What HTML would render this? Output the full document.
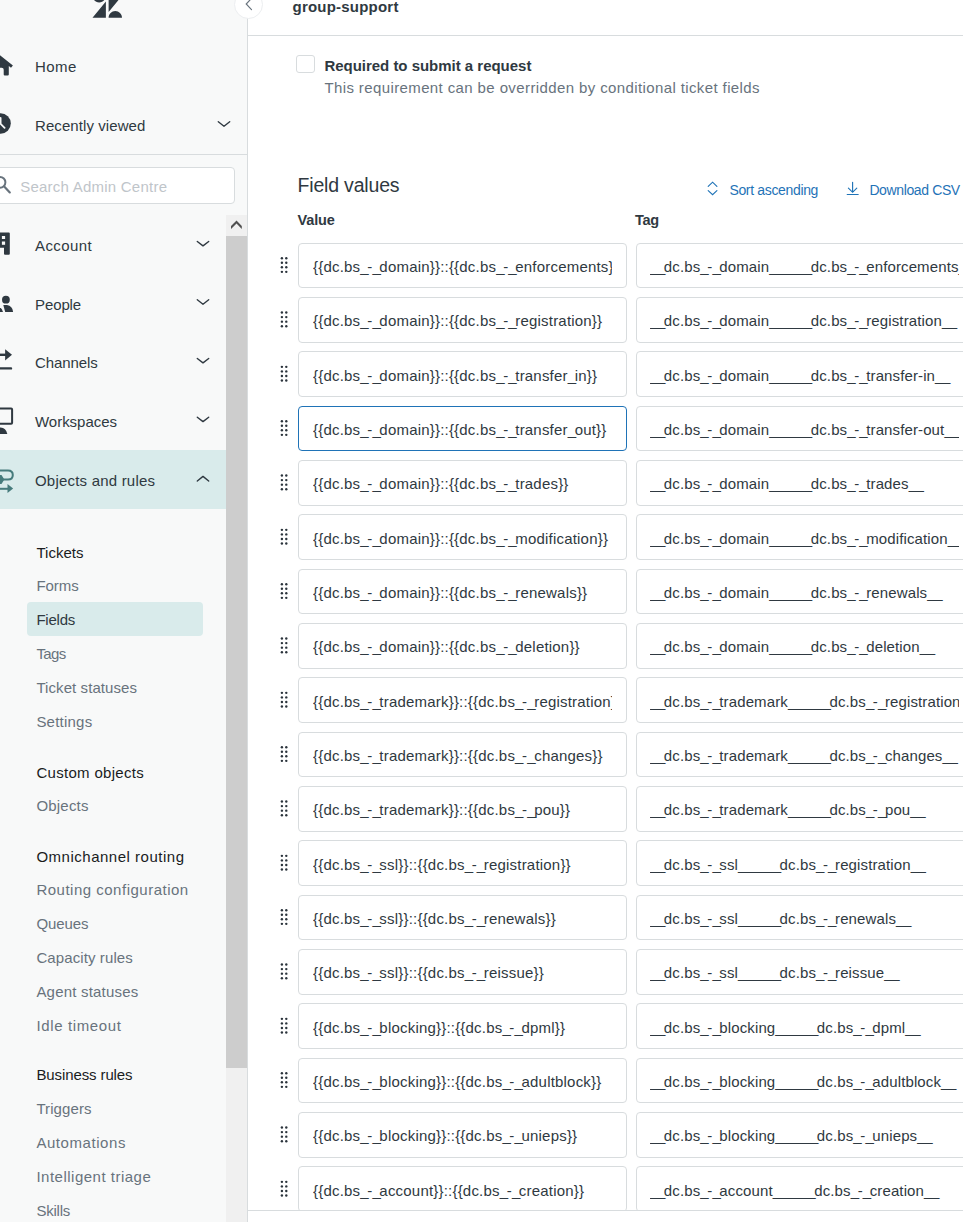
<!DOCTYPE html>
<html><head><meta charset="utf-8"><style>
*{margin:0;padding:0;box-sizing:border-box}
html,body{width:963px;height:1222px;overflow:hidden;background:#fff;font-family:"Liberation Sans",sans-serif}
.t{position:absolute;white-space:nowrap;line-height:1}
#side{position:absolute;left:0;top:0;width:247px;height:1222px;background:#f8f9f9}
#vline{position:absolute;left:247px;top:0;width:1px;height:1222px;background:#d8dcde}
#hline{position:absolute;left:248px;top:35px;width:715px;height:1px;background:#d8dcde}
#bline{position:absolute;left:248px;top:1210px;width:715px;height:1px;background:#d8dcde}
#sep{position:absolute;left:0;top:154px;width:247px;height:1px;background:#d8dcde}
#search{position:absolute;left:-10px;top:167px;width:245px;height:37px;background:#fff;border:1px solid #d8dcde;border-radius:4px}
#sb{position:absolute;left:226px;top:215px;width:21px;height:1007px;background:#f0f0f0}
#thumb{position:absolute;left:226px;top:236px;width:21px;height:832px;background:#cdcdcd}
#band{position:absolute;left:0;top:450px;width:226px;height:59px;background:#d9ebeb}
#fsel{position:absolute;left:27px;top:602px;width:176px;height:34px;background:#d9ebeb;border-radius:4px}
#main{position:absolute;left:248px;top:36px;width:715px;height:1174px;overflow:hidden}
.in{position:absolute;left:50px;width:329px;height:45.67px;border:1px solid #d8dcde;border-radius:4px;background:#fff;overflow:hidden}
.in.f{border-color:#1f73b7}
.in.tg{left:388px;width:400px}
.in span{position:absolute;left:14px;right:14px;overflow:hidden;white-space:nowrap;font-size:15px;line-height:1.4;letter-spacing:0.2px;color:#2f3941}
.in.tg span{left:13px;right:auto;width:309px;letter-spacing:0.12px}
.in i{font-style:normal;letter-spacing:-1.42px}
.h{position:absolute;left:32.8px;width:8px;height:16px}
.h b{position:absolute;width:2.3px;height:2.3px;background:#17202a;border-radius:0.5px}
#cb{position:absolute;left:296px;top:55px;width:19px;height:18px;border:1px solid #d8dcde;border-radius:3px;background:#fff}
#coll{position:absolute;left:234px;top:-10px;width:29px;height:29px;border-radius:50%;background:#fff;border:1px solid #eceef0}
</style></head><body>
<div id="side"></div>
<div id="sep"></div>
<div id="search"></div>
<div id="sb"></div><div id="thumb"></div>
<div id="band"></div>
<div id="fsel"></div>
<div id="vline"></div>
<div id="hline"></div>
<div id="main">
<div class="in" style="top:206.60px"><span style="top:12.40px">{{dc.bs<i>_</i>-<i>_</i>domain}}::{{dc.bs<i>_</i>-<i>_</i>enforcements}}</span></div>
<div class="in tg" style="top:206.60px"><span style="top:12.40px"><i>__</i>dc.bs<i>_</i>-<i>_</i>domain<i>______</i>dc.bs<i>_</i>-<i>_</i>enforcements<i>__</i></span></div>
<div class="in" style="top:260.93px"><span style="top:12.40px">{{dc.bs<i>_</i>-<i>_</i>domain}}::{{dc.bs<i>_</i>-<i>_</i>registration}}</span></div>
<div class="in tg" style="top:260.93px"><span style="top:12.40px"><i>__</i>dc.bs<i>_</i>-<i>_</i>domain<i>______</i>dc.bs<i>_</i>-<i>_</i>registration<i>__</i></span></div>
<div class="in" style="top:315.27px"><span style="top:12.40px">{{dc.bs<i>_</i>-<i>_</i>domain}}::{{dc.bs<i>_</i>-<i>_</i>transfer<i>_</i>in}}</span></div>
<div class="in tg" style="top:315.27px"><span style="top:12.40px"><i>__</i>dc.bs<i>_</i>-<i>_</i>domain<i>______</i>dc.bs<i>_</i>-<i>_</i>transfer-in<i>__</i></span></div>
<div class="in f" style="top:369.60px"><span style="top:12.40px">{{dc.bs<i>_</i>-<i>_</i>domain}}::{{dc.bs<i>_</i>-<i>_</i>transfer<i>_</i>out}}</span></div>
<div class="in tg" style="top:369.60px"><span style="top:12.40px"><i>__</i>dc.bs<i>_</i>-<i>_</i>domain<i>______</i>dc.bs<i>_</i>-<i>_</i>transfer-out<i>__</i></span></div>
<div class="in" style="top:423.93px"><span style="top:12.40px">{{dc.bs<i>_</i>-<i>_</i>domain}}::{{dc.bs<i>_</i>-<i>_</i>trades}}</span></div>
<div class="in tg" style="top:423.93px"><span style="top:12.40px"><i>__</i>dc.bs<i>_</i>-<i>_</i>domain<i>______</i>dc.bs<i>_</i>-<i>_</i>trades<i>__</i></span></div>
<div class="in" style="top:478.26px"><span style="top:12.40px">{{dc.bs<i>_</i>-<i>_</i>domain}}::{{dc.bs<i>_</i>-<i>_</i>modification}}</span></div>
<div class="in tg" style="top:478.26px"><span style="top:12.40px"><i>__</i>dc.bs<i>_</i>-<i>_</i>domain<i>______</i>dc.bs<i>_</i>-<i>_</i>modification<i>__</i></span></div>
<div class="in" style="top:532.60px"><span style="top:12.40px">{{dc.bs<i>_</i>-<i>_</i>domain}}::{{dc.bs<i>_</i>-<i>_</i>renewals}}</span></div>
<div class="in tg" style="top:532.60px"><span style="top:12.40px"><i>__</i>dc.bs<i>_</i>-<i>_</i>domain<i>______</i>dc.bs<i>_</i>-<i>_</i>renewals<i>__</i></span></div>
<div class="in" style="top:586.93px"><span style="top:12.40px">{{dc.bs<i>_</i>-<i>_</i>domain}}::{{dc.bs<i>_</i>-<i>_</i>deletion}}</span></div>
<div class="in tg" style="top:586.93px"><span style="top:12.40px"><i>__</i>dc.bs<i>_</i>-<i>_</i>domain<i>______</i>dc.bs<i>_</i>-<i>_</i>deletion<i>__</i></span></div>
<div class="in" style="top:641.26px"><span style="top:12.40px">{{dc.bs<i>_</i>-<i>_</i>trademark}}::{{dc.bs<i>_</i>-<i>_</i>registration}}</span></div>
<div class="in tg" style="top:641.26px"><span style="top:12.40px"><i>__</i>dc.bs<i>_</i>-<i>_</i>trademark<i>______</i>dc.bs<i>_</i>-<i>_</i>registration<i>__</i></span></div>
<div class="in" style="top:695.60px"><span style="top:12.40px">{{dc.bs<i>_</i>-<i>_</i>trademark}}::{{dc.bs<i>_</i>-<i>_</i>changes}}</span></div>
<div class="in tg" style="top:695.60px"><span style="top:12.40px"><i>__</i>dc.bs<i>_</i>-<i>_</i>trademark<i>______</i>dc.bs<i>_</i>-<i>_</i>changes<i>__</i></span></div>
<div class="in" style="top:749.93px"><span style="top:12.40px">{{dc.bs<i>_</i>-<i>_</i>trademark}}::{{dc.bs<i>_</i>-<i>_</i>pou}}</span></div>
<div class="in tg" style="top:749.93px"><span style="top:12.40px"><i>__</i>dc.bs<i>_</i>-<i>_</i>trademark<i>______</i>dc.bs<i>_</i>-<i>_</i>pou<i>__</i></span></div>
<div class="in" style="top:804.26px"><span style="top:12.40px">{{dc.bs<i>_</i>-<i>_</i>ssl}}::{{dc.bs<i>_</i>-<i>_</i>registration}}</span></div>
<div class="in tg" style="top:804.26px"><span style="top:12.40px"><i>__</i>dc.bs<i>_</i>-<i>_</i>ssl<i>______</i>dc.bs<i>_</i>-<i>_</i>registration<i>__</i></span></div>
<div class="in" style="top:858.60px"><span style="top:12.40px">{{dc.bs<i>_</i>-<i>_</i>ssl}}::{{dc.bs<i>_</i>-<i>_</i>renewals}}</span></div>
<div class="in tg" style="top:858.60px"><span style="top:12.40px"><i>__</i>dc.bs<i>_</i>-<i>_</i>ssl<i>______</i>dc.bs<i>_</i>-<i>_</i>renewals<i>__</i></span></div>
<div class="in" style="top:912.93px"><span style="top:12.40px">{{dc.bs<i>_</i>-<i>_</i>ssl}}::{{dc.bs<i>_</i>-<i>_</i>reissue}}</span></div>
<div class="in tg" style="top:912.93px"><span style="top:12.40px"><i>__</i>dc.bs<i>_</i>-<i>_</i>ssl<i>______</i>dc.bs<i>_</i>-<i>_</i>reissue<i>__</i></span></div>
<div class="in" style="top:967.26px"><span style="top:12.40px">{{dc.bs<i>_</i>-<i>_</i>blocking}}::{{dc.bs<i>_</i>-<i>_</i>dpml}}</span></div>
<div class="in tg" style="top:967.26px"><span style="top:12.40px"><i>__</i>dc.bs<i>_</i>-<i>_</i>blocking<i>______</i>dc.bs<i>_</i>-<i>_</i>dpml<i>__</i></span></div>
<div class="in" style="top:1021.60px"><span style="top:12.40px">{{dc.bs<i>_</i>-<i>_</i>blocking}}::{{dc.bs<i>_</i>-<i>_</i>adultblock}}</span></div>
<div class="in tg" style="top:1021.60px"><span style="top:12.40px"><i>__</i>dc.bs<i>_</i>-<i>_</i>blocking<i>______</i>dc.bs<i>_</i>-<i>_</i>adultblock<i>__</i></span></div>
<div class="in" style="top:1075.93px"><span style="top:12.40px">{{dc.bs<i>_</i>-<i>_</i>blocking}}::{{dc.bs<i>_</i>-<i>_</i>unieps}}</span></div>
<div class="in tg" style="top:1075.93px"><span style="top:12.40px"><i>__</i>dc.bs<i>_</i>-<i>_</i>blocking<i>______</i>dc.bs<i>_</i>-<i>_</i>unieps<i>__</i></span></div>
<div class="in" style="top:1130.26px"><span style="top:12.40px">{{dc.bs<i>_</i>-<i>_</i>account}}::{{dc.bs<i>_</i>-<i>_</i>creation}}</span></div>
<div class="in tg" style="top:1130.26px"><span style="top:12.40px"><i>__</i>dc.bs<i>_</i>-<i>_</i>account<i>______</i>dc.bs<i>_</i>-<i>_</i>creation<i>__</i></span></div>
</div>
<div id="bline"></div>
<div id="cb"></div>
<div id="coll"></div>
<svg width="36.5" height="36.5" viewBox="0 0 24 24" style="position:absolute;left:88.8px;top:-9.8px"><path fill="#2f3941" d="M11.1 7.6v10.6H2.3zm0-3.8C11.1 6.2 9.1 8.2 6.7 8.2S2.3 6.2 2.3 3.8zm1.8 14.4c0-2.4 2-4.4 4.4-4.4s4.4 2 4.4 4.4zm0-3.8V3.8h8.8z"/></svg>
<svg id="sideicons" width="40" height="500" viewBox="0 0 40 500" style="position:absolute;left:0;top:0">
<path fill="#2f3941" d="M-3,52.8 L12.9,65.6 L11,67.7 L8.8,66 L8.8,74.5 Q8.8,75.6 7.7,75.6 L4.8,75.6 Q3.7,75.6 3.7,74.5 L3.7,69.8 Q3.7,67.8 1.7,67.8 L-5,67.8 Z"/>
<circle cx="0.55" cy="123.5" r="10.25" fill="#2f3941"/>
<path d="M0.6,118 V123.8 L4.6,127.8" stroke="#f8f9f9" stroke-width="1.8" fill="none" stroke-linecap="round"/>
<circle cx="0" cy="182.3" r="5.4" stroke="#68737d" stroke-width="2" fill="none"/>
<path d="M4.2,186.6 L9.8,192.4" stroke="#68737d" stroke-width="2.2" stroke-linecap="round"/>
<path fill="#2f3941" d="M-6,233.6 Q-6,232.6 -5,232.6 L8.8,232.6 Q9.8,232.6 9.8,233.6 L9.8,253.8 Q9.8,254.8 8.8,254.8 L5,254.8 Q4,254.8 4,253.8 L4,247.8 L-6,247.8 Z"/>
<rect x="1.9" y="236" width="3.2" height="3" fill="#f8f9f9"/>
<rect x="1.9" y="241.5" width="3.2" height="3.3" fill="#f8f9f9"/>
<circle cx="5.9" cy="299.7" r="3.9" fill="#2f3941"/>
<path fill="#2f3941" d="M3.3,305.1 L7,305.1 Q12.5,306 13.1,312 L5.2,312 Z"/>
<path fill="#2f3941" d="M-4,306 Q1.8,306.5 3,312 L-4,312 Z"/>
<path d="M-2,354.8 H6" stroke="#2f3941" stroke-width="2.4"/>
<path fill="#2f3941" d="M5.1,349.2 L12,354.8 L5.1,360.6 Z"/>
<path d="M-2,368.4 H11" stroke="#2f3941" stroke-width="2.4" stroke-linecap="round"/>
<path d="M-4,408.4 H11.1 Q12.1,408.4 12.1,409.4 L12.1,422.8 Q12.1,423.8 11.1,423.8 H-4" stroke="#2f3941" stroke-width="2" fill="none"/>
<path fill="#2f3941" d="M-6,434 L-6,431 Q-4,427.5 0.5,427.5 Q6,427.5 7.3,434 Z"/>
<path d="M-3,470.5 H8 Q12.8,470.5 12.8,475 Q12.8,479.6 8,479.6 H3" stroke="#467b7c" stroke-width="2" fill="none"/>
<path fill="#467b7c" d="M-3,475 L1.5,475 L4.3,479.6 L1.5,484 L-3,484 Z"/>
<path d="M-3,488.8 H8" stroke="#467b7c" stroke-width="2"/>
<path fill="#467b7c" d="M7.5,484 L13.1,488.6 L7.5,493 Z"/>
</svg>
<svg width="247" height="500" style="position:absolute;left:0;top:0"><path d="M218.3,121.8 L224,126.2 L229.7,121.8" stroke="#2f3941" stroke-width="1.4" fill="none" stroke-linecap="round" stroke-linejoin="round"/><path d="M197.3,241.5 L203,245.89999999999998 L208.7,241.5" stroke="#2f3941" stroke-width="1.4" fill="none" stroke-linecap="round" stroke-linejoin="round"/><path d="M197.3,299.8 L203,304.2 L208.7,299.8" stroke="#2f3941" stroke-width="1.4" fill="none" stroke-linecap="round" stroke-linejoin="round"/><path d="M197.3,358.5 L203,362.9 L208.7,358.5" stroke="#2f3941" stroke-width="1.4" fill="none" stroke-linecap="round" stroke-linejoin="round"/><path d="M197.3,417.2 L203,421.59999999999997 L208.7,417.2" stroke="#2f3941" stroke-width="1.4" fill="none" stroke-linecap="round" stroke-linejoin="round"/><path d="M197.3,481.0 L203,476.4 L208.7,481.0" stroke="#2f3941" stroke-width="1.4" fill="none" stroke-linecap="round" stroke-linejoin="round"/>
<path d="M231,226 L236.5,220.6 L241.8,226 L241.8,228.9 L236.5,223.6 L231,228.9 Z" fill="#505050"/>
</svg>
<svg width="963" height="220" style="position:absolute;left:0;top:0">
<path d="M251.5,-1.6 L246.2,4 L251.5,9.6" stroke="#68737d" stroke-width="1.15" fill="none" stroke-linecap="round"/>
<path d="M708.2,186.4 L712.6,182.2 L716.9,186.4 M708.2,190.6 L712.6,194.6 L716.9,190.6" stroke="#1f73b7" stroke-width="1.15" fill="none" stroke-linecap="round"/>
<path d="M852.6,182.3 V192 M848.4,188.2 L852.6,192.3 L856.8,188.2 M847.2,194.5 H858.2" stroke="#1f73b7" stroke-width="1.15" fill="none" stroke-linecap="round"/>
</svg>
<svg width="963" height="1222" style="position:absolute;left:0;top:0" fill="#2a333b"><circle cx="281.9" cy="258.20" r="1.2"/><circle cx="286.3" cy="258.20" r="1.2"/><circle cx="281.9" cy="262.75" r="1.2"/><circle cx="286.3" cy="262.75" r="1.2"/><circle cx="281.9" cy="267.30" r="1.2"/><circle cx="286.3" cy="267.30" r="1.2"/><circle cx="281.9" cy="271.85" r="1.2"/><circle cx="286.3" cy="271.85" r="1.2"/><circle cx="281.9" cy="312.53" r="1.2"/><circle cx="286.3" cy="312.53" r="1.2"/><circle cx="281.9" cy="317.08" r="1.2"/><circle cx="286.3" cy="317.08" r="1.2"/><circle cx="281.9" cy="321.63" r="1.2"/><circle cx="286.3" cy="321.63" r="1.2"/><circle cx="281.9" cy="326.18" r="1.2"/><circle cx="286.3" cy="326.18" r="1.2"/><circle cx="281.9" cy="366.87" r="1.2"/><circle cx="286.3" cy="366.87" r="1.2"/><circle cx="281.9" cy="371.42" r="1.2"/><circle cx="286.3" cy="371.42" r="1.2"/><circle cx="281.9" cy="375.97" r="1.2"/><circle cx="286.3" cy="375.97" r="1.2"/><circle cx="281.9" cy="380.52" r="1.2"/><circle cx="286.3" cy="380.52" r="1.2"/><circle cx="281.9" cy="421.20" r="1.2"/><circle cx="286.3" cy="421.20" r="1.2"/><circle cx="281.9" cy="425.75" r="1.2"/><circle cx="286.3" cy="425.75" r="1.2"/><circle cx="281.9" cy="430.30" r="1.2"/><circle cx="286.3" cy="430.30" r="1.2"/><circle cx="281.9" cy="434.85" r="1.2"/><circle cx="286.3" cy="434.85" r="1.2"/><circle cx="281.9" cy="475.53" r="1.2"/><circle cx="286.3" cy="475.53" r="1.2"/><circle cx="281.9" cy="480.08" r="1.2"/><circle cx="286.3" cy="480.08" r="1.2"/><circle cx="281.9" cy="484.63" r="1.2"/><circle cx="286.3" cy="484.63" r="1.2"/><circle cx="281.9" cy="489.18" r="1.2"/><circle cx="286.3" cy="489.18" r="1.2"/><circle cx="281.9" cy="529.87" r="1.2"/><circle cx="286.3" cy="529.87" r="1.2"/><circle cx="281.9" cy="534.41" r="1.2"/><circle cx="286.3" cy="534.41" r="1.2"/><circle cx="281.9" cy="538.97" r="1.2"/><circle cx="286.3" cy="538.97" r="1.2"/><circle cx="281.9" cy="543.51" r="1.2"/><circle cx="286.3" cy="543.51" r="1.2"/><circle cx="281.9" cy="584.20" r="1.2"/><circle cx="286.3" cy="584.20" r="1.2"/><circle cx="281.9" cy="588.75" r="1.2"/><circle cx="286.3" cy="588.75" r="1.2"/><circle cx="281.9" cy="593.30" r="1.2"/><circle cx="286.3" cy="593.30" r="1.2"/><circle cx="281.9" cy="597.85" r="1.2"/><circle cx="286.3" cy="597.85" r="1.2"/><circle cx="281.9" cy="638.53" r="1.2"/><circle cx="286.3" cy="638.53" r="1.2"/><circle cx="281.9" cy="643.08" r="1.2"/><circle cx="286.3" cy="643.08" r="1.2"/><circle cx="281.9" cy="647.63" r="1.2"/><circle cx="286.3" cy="647.63" r="1.2"/><circle cx="281.9" cy="652.18" r="1.2"/><circle cx="286.3" cy="652.18" r="1.2"/><circle cx="281.9" cy="692.86" r="1.2"/><circle cx="286.3" cy="692.86" r="1.2"/><circle cx="281.9" cy="697.41" r="1.2"/><circle cx="286.3" cy="697.41" r="1.2"/><circle cx="281.9" cy="701.96" r="1.2"/><circle cx="286.3" cy="701.96" r="1.2"/><circle cx="281.9" cy="706.51" r="1.2"/><circle cx="286.3" cy="706.51" r="1.2"/><circle cx="281.9" cy="747.20" r="1.2"/><circle cx="286.3" cy="747.20" r="1.2"/><circle cx="281.9" cy="751.75" r="1.2"/><circle cx="286.3" cy="751.75" r="1.2"/><circle cx="281.9" cy="756.30" r="1.2"/><circle cx="286.3" cy="756.30" r="1.2"/><circle cx="281.9" cy="760.85" r="1.2"/><circle cx="286.3" cy="760.85" r="1.2"/><circle cx="281.9" cy="801.53" r="1.2"/><circle cx="286.3" cy="801.53" r="1.2"/><circle cx="281.9" cy="806.08" r="1.2"/><circle cx="286.3" cy="806.08" r="1.2"/><circle cx="281.9" cy="810.63" r="1.2"/><circle cx="286.3" cy="810.63" r="1.2"/><circle cx="281.9" cy="815.18" r="1.2"/><circle cx="286.3" cy="815.18" r="1.2"/><circle cx="281.9" cy="855.86" r="1.2"/><circle cx="286.3" cy="855.86" r="1.2"/><circle cx="281.9" cy="860.41" r="1.2"/><circle cx="286.3" cy="860.41" r="1.2"/><circle cx="281.9" cy="864.96" r="1.2"/><circle cx="286.3" cy="864.96" r="1.2"/><circle cx="281.9" cy="869.51" r="1.2"/><circle cx="286.3" cy="869.51" r="1.2"/><circle cx="281.9" cy="910.20" r="1.2"/><circle cx="286.3" cy="910.20" r="1.2"/><circle cx="281.9" cy="914.75" r="1.2"/><circle cx="286.3" cy="914.75" r="1.2"/><circle cx="281.9" cy="919.30" r="1.2"/><circle cx="286.3" cy="919.30" r="1.2"/><circle cx="281.9" cy="923.85" r="1.2"/><circle cx="286.3" cy="923.85" r="1.2"/><circle cx="281.9" cy="964.53" r="1.2"/><circle cx="286.3" cy="964.53" r="1.2"/><circle cx="281.9" cy="969.08" r="1.2"/><circle cx="286.3" cy="969.08" r="1.2"/><circle cx="281.9" cy="973.63" r="1.2"/><circle cx="286.3" cy="973.63" r="1.2"/><circle cx="281.9" cy="978.18" r="1.2"/><circle cx="286.3" cy="978.18" r="1.2"/><circle cx="281.9" cy="1018.86" r="1.2"/><circle cx="286.3" cy="1018.86" r="1.2"/><circle cx="281.9" cy="1023.41" r="1.2"/><circle cx="286.3" cy="1023.41" r="1.2"/><circle cx="281.9" cy="1027.96" r="1.2"/><circle cx="286.3" cy="1027.96" r="1.2"/><circle cx="281.9" cy="1032.51" r="1.2"/><circle cx="286.3" cy="1032.51" r="1.2"/><circle cx="281.9" cy="1073.19" r="1.2"/><circle cx="286.3" cy="1073.19" r="1.2"/><circle cx="281.9" cy="1077.74" r="1.2"/><circle cx="286.3" cy="1077.74" r="1.2"/><circle cx="281.9" cy="1082.29" r="1.2"/><circle cx="286.3" cy="1082.29" r="1.2"/><circle cx="281.9" cy="1086.85" r="1.2"/><circle cx="286.3" cy="1086.85" r="1.2"/><circle cx="281.9" cy="1127.53" r="1.2"/><circle cx="286.3" cy="1127.53" r="1.2"/><circle cx="281.9" cy="1132.08" r="1.2"/><circle cx="286.3" cy="1132.08" r="1.2"/><circle cx="281.9" cy="1136.63" r="1.2"/><circle cx="286.3" cy="1136.63" r="1.2"/><circle cx="281.9" cy="1141.18" r="1.2"/><circle cx="286.3" cy="1141.18" r="1.2"/><circle cx="281.9" cy="1181.86" r="1.2"/><circle cx="286.3" cy="1181.86" r="1.2"/><circle cx="281.9" cy="1186.41" r="1.2"/><circle cx="286.3" cy="1186.41" r="1.2"/><circle cx="281.9" cy="1190.96" r="1.2"/><circle cx="286.3" cy="1190.96" r="1.2"/><circle cx="281.9" cy="1195.51" r="1.2"/><circle cx="286.3" cy="1195.51" r="1.2"/></svg>
<div class="t" style="left:35.0px;top:59.00px;font-size:15px;color:#2f3941;letter-spacing:0.429px;">Home</div>
<div class="t" style="left:35.0px;top:118.20px;font-size:15px;color:#2f3941;letter-spacing:0.077px;">Recently viewed</div>
<div class="t" style="left:35.0px;top:238.20px;font-size:15px;color:#2f3941;letter-spacing:0.417px;">Account</div>
<div class="t" style="left:35.0px;top:296.50px;font-size:15px;color:#2f3941;letter-spacing:-0.102px;">People</div>
<div class="t" style="left:35.0px;top:355.00px;font-size:15px;color:#2f3941;letter-spacing:-0.097px;">Channels</div>
<div class="t" style="left:35.0px;top:413.70px;font-size:15px;color:#2f3941;letter-spacing:-0.028px;">Workspaces</div>
<div class="t" style="left:35.0px;top:472.80px;font-size:15px;color:#2f3941;letter-spacing:0.204px;">Objects and rules</div>
<div class="t" style="left:20.2px;top:178.90px;font-size:15px;color:#bfc5ca;letter-spacing:0.235px;">Search Admin Centre</div>
<div class="t" style="left:36.4px;top:544.80px;font-size:15px;color:#1a1c1e;letter-spacing:0.025px;">Tickets</div>
<div class="t" style="left:36.4px;top:578.00px;font-size:15px;color:#68737d;letter-spacing:-0.024px;">Forms</div>
<div class="t" style="left:36.4px;top:612.00px;font-size:15px;color:#2f3941;letter-spacing:-0.223px;">Fields</div>
<div class="t" style="left:36.4px;top:645.70px;font-size:15px;color:#68737d;letter-spacing:-0.595px;">Tags</div>
<div class="t" style="left:36.4px;top:679.80px;font-size:15px;color:#68737d;letter-spacing:0.080px;">Ticket statuses</div>
<div class="t" style="left:36.4px;top:713.70px;font-size:15px;color:#68737d;letter-spacing:0.228px;">Settings</div>
<div class="t" style="left:36.4px;top:764.60px;font-size:15px;color:#1a1c1e;letter-spacing:0.309px;">Custom objects</div>
<div class="t" style="left:36.4px;top:797.70px;font-size:15px;color:#68737d;letter-spacing:0.208px;">Objects</div>
<div class="t" style="left:36.4px;top:848.70px;font-size:15px;color:#1a1c1e;letter-spacing:0.510px;">Omnichannel routing</div>
<div class="t" style="left:36.4px;top:882.30px;font-size:15px;color:#68737d;letter-spacing:0.502px;">Routing configuration</div>
<div class="t" style="left:36.4px;top:916.20px;font-size:15px;color:#68737d;letter-spacing:-0.088px;">Queues</div>
<div class="t" style="left:36.4px;top:949.80px;font-size:15px;color:#68737d;letter-spacing:0.104px;">Capacity rules</div>
<div class="t" style="left:36.4px;top:983.50px;font-size:15px;color:#68737d;letter-spacing:0.205px;">Agent statuses</div>
<div class="t" style="left:36.4px;top:1017.60px;font-size:15px;color:#68737d;letter-spacing:0.632px;">Idle timeout</div>
<div class="t" style="left:36.4px;top:1067.40px;font-size:15px;color:#1a1c1e;letter-spacing:-0.104px;">Business rules</div>
<div class="t" style="left:36.4px;top:1101.00px;font-size:15px;color:#68737d;letter-spacing:0.092px;">Triggers</div>
<div class="t" style="left:36.4px;top:1135.00px;font-size:15px;color:#68737d;letter-spacing:0.562px;">Automations</div>
<div class="t" style="left:36.4px;top:1169.00px;font-size:15px;color:#68737d;letter-spacing:0.500px;">Intelligent triage</div>
<div class="t" style="left:36.4px;top:1202.70px;font-size:15px;color:#68737d;letter-spacing:-0.221px;">Skills</div>
<div class="t" style="left:292.5px;top:-1.50px;font-size:15px;color:#2f3941;letter-spacing:0.216px;font-weight:700;">group-support</div>
<div class="t" style="left:324.4px;top:58.20px;font-size:15px;color:#2f3941;letter-spacing:-0.020px;font-weight:700;">Required to submit a request</div>
<div class="t" style="left:324.4px;top:79.50px;font-size:15px;color:#68737d;letter-spacing:0.389px;">This requirement can be overridden by conditional ticket fields</div>
<div class="t" style="left:297.5px;top:176.40px;font-size:19.5px;color:#2f3941;letter-spacing:-0.178px;">Field values</div>
<div class="t" style="left:297.5px;top:212.74px;font-size:14.5px;color:#2f3941;letter-spacing:-0.147px;font-weight:700;">Value</div>
<div class="t" style="left:635.0px;top:212.74px;font-size:14.5px;color:#2f3941;letter-spacing:-0.252px;font-weight:700;">Tag</div>
<div class="t" style="left:729.4px;top:183.07px;font-size:14px;color:#1f73b7;letter-spacing:-0.338px;">Sort ascending</div>
<div class="t" style="left:869.4px;top:183.07px;font-size:14px;color:#1f73b7;letter-spacing:-0.376px;">Download CSV</div>
</body></html>
